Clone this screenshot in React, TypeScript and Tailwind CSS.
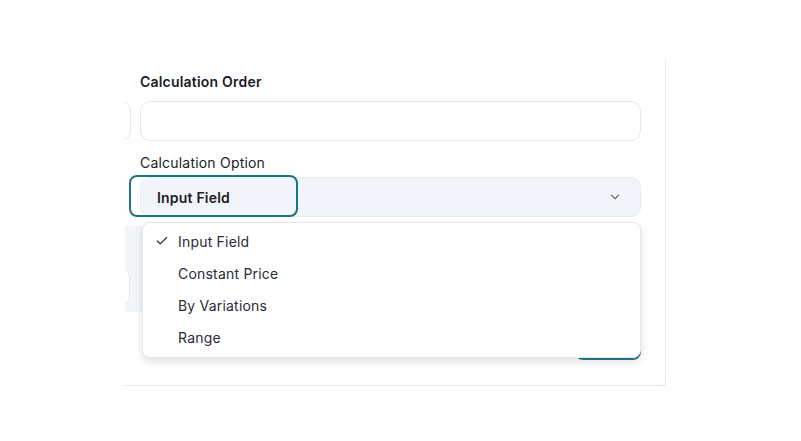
import { Check, ChevronDown } from "lucide-react";

const options = ["Input Field", "Constant Price", "By Variations", "Range"];

export default function App() {
  return (
    <div
      className="w-[801px] h-[441px] bg-white pl-[125px] pt-[60px] tracking-[0.2px]"
      style={{ fontFamily: "Inter, 'Noto Sans', sans-serif" }}
    >
      {/* visible part of the modal, left side is cut off */}
      <div className="w-[541px] h-[326px] overflow-hidden">
        <div className="ml-[-300px] w-[841px] h-[326px] border-r border-b border-[#e6e8ec] rounded-br-[4px] pl-[24px] pr-[25px] pt-[12px]">
          <div className="grid grid-cols-[282px_501px] gap-x-[9px]">
            {/* left column (mostly clipped) */}
            <div className="flex flex-col">
              <div className="h-[20px] mb-[9px]" />
              <div className="h-[40px] rounded-[10px] border border-[#e5e7eb] bg-white" />
            </div>

            {/* right column */}
            <div className="flex flex-col">
              <label className="text-[14px] leading-[20px] font-semibold text-[#1c1c28] mb-[9px]">
                Calculation Order
              </label>
              <div className="h-[40px] rounded-[10px] border border-[#e5e7eb] bg-white" />

              <label className="mt-[12px] mb-[4px] text-[14px] leading-[20px] text-[#1c1c28]">
                Calculation Option
              </label>

              <div className="relative">
                <button className="flex h-[40px] w-full items-center justify-between rounded-[10px] border border-[#e8ecf2] bg-[#f1f4f9] pl-[16px] pr-[18px] text-left">
                  <span className="text-[14px] font-semibold text-[#1c1c28]">Input Field</span>
                  <ChevronDown size={14} strokeWidth={2} className="text-[#6b7280]" />
                </button>

                {/* focus ring */}
                <div className="pointer-events-none absolute left-[-11px] top-[-2px] h-[42px] w-[169px] rounded-[8px] border-2 border-[#1c767d]" />

                {/* dropdown menu */}
                <div className="absolute left-[2px] right-0 top-[45px] z-10 rounded-[8px] border border-[#e3e6eb] bg-white pt-[2px] pb-[4px] shadow-[0_4px_10px_rgba(0,0,0,0.12)]">
                  {options.map((opt, i) => (
                    <div key={opt} className="flex h-[32px] items-center pl-[12px] text-[14px] text-[#2b2b36]">
                      <span className="flex w-[23px] items-center">
                        {i === 0 && <Check size={14} strokeWidth={2} className="text-[#2b2b36]" />}
                      </span>
                      {opt}
                    </div>
                  ))}
                </div>
              </div>
            </div>

            {/* row behind the dropdown */}
            <div className="col-span-2 mt-[9px] flex h-[86px] items-end rounded-[8px] bg-[#f3f5f9] pb-[7px]">
              <div className="ml-[-10px] h-[36px] w-[291px] rounded-[8px] border border-[#e5e7eb] bg-white" />
            </div>

            <div className="col-span-2 mt-[12px] flex justify-end">
              <button className="h-[36px] w-[66px] rounded-[8px] border-2 border-[#2b7d8c] bg-white" />
            </div>
          </div>
        </div>
      </div>
    </div>
  );
}
